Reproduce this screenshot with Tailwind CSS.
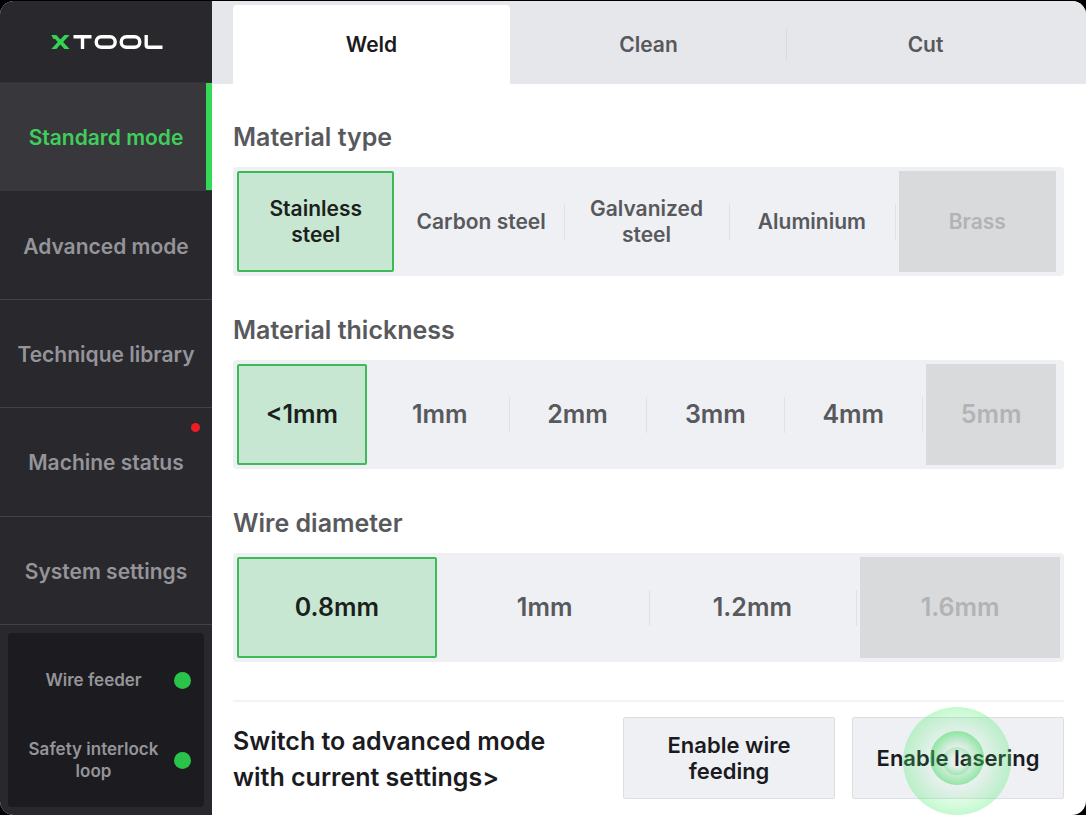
<!DOCTYPE html>
<html lang="en">

<head>
    <meta charset="UTF-8">
    <meta name="viewport" content="width=device-width, initial-scale=1.0">
    <script src="https://cdn.jsdelivr.net/npm/@tailwindcss/browser@4"></script>
    <title>xTool Welder</title>
</head>

<body class="bg-black min-h-screen flex pt-px font-['Inter','Liberation_Sans',sans-serif] font-semibold">

    <div class="flex flex-1 rounded-[14px] overflow-hidden bg-white">

        <!-- sidebar -->
        <aside class="w-[212px] shrink-0 flex flex-col bg-[#29282d] text-[#949499]">
            <div class="h-[82px] flex items-center justify-center pl-0.5 border-b border-[#333237]">
                <svg class="w-[112px] h-[16px]" viewBox="0 0 112 16" fill="none" role="img" aria-label="xTool">
                    <path d="M0.300 1h5l4 4.600L13.500 1h5.100l-6.500 7 6.500 7h-5.200L9.300 10.500 5.400 15H.3l6.500-7-2.700-3H2.400z" fill="#35d354" />
                    <path d="M22.500 2.700h18M31.500 2.700V15" stroke="#fff" stroke-width="3.400" />
                    <rect x="45.200" y="2.700" width="19" height="10.600" rx="5.200" stroke="#fff" stroke-width="3.400" />
                    <rect x="70.200" y="2.700" width="18.600" height="10.600" rx="5.200" stroke="#fff" stroke-width="3.400" />
                    <path d="M95.200 1v10q0 2.300 2.300 2.300H111.500" stroke="#fff" stroke-width="3.400" />
                </svg>
            </div>

            <nav class="flex-1 flex flex-col text-[21px] leading-7">
                <a href="#" aria-current="page"
                    class="flex-1 flex items-center justify-center pt-[3px] border-b border-[#38373b] bg-[#38373b] text-[#3fce5c] shadow-[inset_-6px_0_#35d957]">Standard mode</a>
                <a href="#" class="flex-1 flex items-center justify-center pt-[3px] border-b border-[#434247]">Advanced mode</a>
                <a href="#" class="flex-1 flex items-center justify-center pt-[3px] border-b border-[#434247]">Technique library</a>
                <a href="#" class="relative flex-1 flex items-center justify-center pt-[3px] border-b border-[#434247]">
                    Machine status
                    <span class="absolute top-[15px] right-3 w-[9px] h-[9px] rounded-full bg-[#ee1c25]"></span>
                </a>
                <a href="#" class="flex-1 flex items-center justify-center pt-[3px] border-b border-[#434247]">System settings</a>
            </nav>

            <!-- device status -->
            <div class="m-2 h-[174px] rounded-sm bg-[#1c1b1f] flex flex-col justify-around px-[13px] py-[7px] text-[17px] leading-[22px] text-center">
                <div class="h-20 flex items-center justify-between gap-2">
                    <p class="flex-1">Wire feeder</p>
                    <span class="w-[17px] h-[17px] rounded-full bg-[#2bc24a]"></span>
                </div>
                <div class="h-20 flex items-center justify-between gap-2">
                    <p class="flex-1">Safety interlock loop</p>
                    <span class="w-[17px] h-[17px] rounded-full bg-[#2bc24a]"></span>
                </div>
            </div>
        </aside>

        <div class="flex-1 flex flex-col min-w-0">
            <!-- tabs -->
            <div role="tablist" class="h-[83px] bg-[#e6e7eb] flex pl-[21px] pr-[22px] pt-1 text-[21px] text-[#56585c]">
                <button role="tab" aria-selected="true" class="flex-1 bg-white rounded-t-sm text-[#1b1b1d]">Weld</button>
                <button role="tab" aria-selected="false"
                    class="relative flex-1 after:absolute after:right-0 after:top-6 after:h-8 after:w-px after:bg-[#d9dadf]">Clean</button>
                <button role="tab" aria-selected="false" class="flex-1">Cut</button>
            </div>

            <main class="flex-1 flex flex-col pl-[21px] pr-[22px] pt-9 pb-4">
                <div class="flex flex-col gap-[37px] text-[#58595c]">
                    <section>
                        <h2 id="type" class="text-[25px] leading-[34px]">Material type</h2>
                        <div role="radiogroup" aria-labelledby="type"
                            class="mt-[13px] h-[109px] grid grid-cols-5 gap-2 py-1 pl-1 pr-2 rounded-sm bg-[#eff0f4] text-[21px] leading-[26px] text-center">
                            <label class="relative flex items-center justify-center px-4 rounded-xs border-2 border-[#3cba58] bg-[#c8e7d2] text-[#1b1f1d]">
                                <input type="radio" name="type" class="sr-only" checked>Stainless steel</label>
                            <label class="relative flex items-center justify-center after:absolute after:-right-[5px] after:h-9 after:w-px after:bg-[#e0e1e6]">
                                <input type="radio" name="type" class="sr-only">Carbon steel</label>
                            <label class="relative flex items-center justify-center px-4 after:absolute after:-right-[5px] after:h-9 after:w-px after:bg-[#e0e1e6]">
                                <input type="radio" name="type" class="sr-only">Galvanized steel</label>
                            <label class="relative flex items-center justify-center after:absolute after:-right-[5px] after:h-9 after:w-px after:bg-[#e0e1e6]">
                                <input type="radio" name="type" class="sr-only">Aluminium</label>
                            <label class="relative flex items-center justify-center bg-[#d9dadc] text-[#b2b3b5]">
                                <input type="radio" name="type" class="sr-only" disabled>Brass</label>
                        </div>
                    </section>

                    <section>
                        <h2 id="thickness" class="text-[25px] leading-[34px]">Material thickness</h2>
                        <div role="radiogroup" aria-labelledby="thickness"
                            class="mt-[13px] h-[109px] grid grid-cols-6 gap-2 py-1 pl-1 pr-2 rounded-sm bg-[#eff0f4] text-[25px] text-center">
                            <label class="relative flex items-center justify-center rounded-xs border-2 border-[#3cba58] bg-[#c8e7d2] text-[#1b1f1d]">
                                <input type="radio" name="thickness" class="sr-only" checked>&lt;1mm</label>
                            <label class="relative flex items-center justify-center after:absolute after:-right-[5px] after:h-9 after:w-px after:bg-[#e0e1e6]">
                                <input type="radio" name="thickness" class="sr-only">1mm</label>
                            <label class="relative flex items-center justify-center after:absolute after:-right-[5px] after:h-9 after:w-px after:bg-[#e0e1e6]">
                                <input type="radio" name="thickness" class="sr-only">2mm</label>
                            <label class="relative flex items-center justify-center after:absolute after:-right-[5px] after:h-9 after:w-px after:bg-[#e0e1e6]">
                                <input type="radio" name="thickness" class="sr-only">3mm</label>
                            <label class="relative flex items-center justify-center after:absolute after:-right-[5px] after:h-9 after:w-px after:bg-[#e0e1e6]">
                                <input type="radio" name="thickness" class="sr-only">4mm</label>
                            <label class="relative flex items-center justify-center bg-[#d9dadc] text-[#b2b3b5]">
                                <input type="radio" name="thickness" class="sr-only" disabled>5mm</label>
                        </div>
                    </section>

                    <section>
                        <h2 id="diameter" class="text-[25px] leading-[34px]">Wire diameter</h2>
                        <div role="radiogroup" aria-labelledby="diameter"
                            class="mt-[13px] h-[109px] grid grid-cols-4 gap-2 p-1 rounded-sm bg-[#eff0f4] text-[25px] text-center">
                            <label class="relative flex items-center justify-center rounded-xs border-2 border-[#3cba58] bg-[#c8e7d2] text-[#1b1f1d]">
                                <input type="radio" name="diameter" class="sr-only" checked>0.8mm</label>
                            <label class="relative flex items-center justify-center after:absolute after:-right-[5px] after:h-9 after:w-px after:bg-[#e0e1e6]">
                                <input type="radio" name="diameter" class="sr-only">1mm</label>
                            <label class="relative flex items-center justify-center after:absolute after:-right-[5px] after:h-9 after:w-px after:bg-[#e0e1e6]">
                                <input type="radio" name="diameter" class="sr-only">1.2mm</label>
                            <label class="relative flex items-center justify-center bg-[#d9dadc] text-[#b2b3b5]">
                                <input type="radio" name="diameter" class="sr-only" disabled>1.6mm</label>
                        </div>
                    </section>
                </div>

                <!-- actions -->
                <div class="mt-auto pt-[15px] border-t-2 border-[#f3f3f5] flex items-center gap-[17px] text-[#1b1b1f]">
                    <a href="#" class="flex-1 pt-0.5 text-[25px] leading-9">Switch to advanced mode<br>with current settings&gt;</a>
                    <button class="w-[212px] h-[82px] px-8 rounded-xs border border-[#dddee2] bg-[#eff0f4] text-[22px] leading-[26px]">Enable wire feeding</button>
                    <button class="relative w-[212px] h-[82px] rounded-xs border border-[#dddee2] bg-[#eff0f4] text-[22px] leading-[26px]">
                        Enable lasering
                        <!-- tap ripple -->
                        <svg class="absolute -top-[11px] left-[50px] w-[108px] h-[108px] pointer-events-none" viewBox="0 0 108 108" aria-hidden="true">
                            <defs>
                                <radialGradient id="outer">
                                    <stop offset="0.400" stop-color="#50ee70" stop-opacity="0" />
                                    <stop offset="1" stop-color="#50ee70" stop-opacity="0.340" />
                                </radialGradient>
                                <radialGradient id="middle">
                                    <stop offset="0.400" stop-color="#40dc60" stop-opacity="0.050" />
                                    <stop offset="1" stop-color="#40dc60" stop-opacity="0.520" />
                                </radialGradient>
                                <radialGradient id="inner">
                                    <stop offset="0.400" stop-color="#40dc60" stop-opacity="0" />
                                    <stop offset="1" stop-color="#40dc60" stop-opacity="0.300" />
                                </radialGradient>
                            </defs>
                            <circle cx="54" cy="54" r="54" fill="url(#outer)" />
                            <circle cx="54" cy="51" r="27" fill="url(#middle)" />
                            <circle cx="54" cy="54" r="14" fill="url(#inner)" />
                        </svg>
                    </button>
                </div>
            </main>
        </div>
    </div>

</body>

</html>
